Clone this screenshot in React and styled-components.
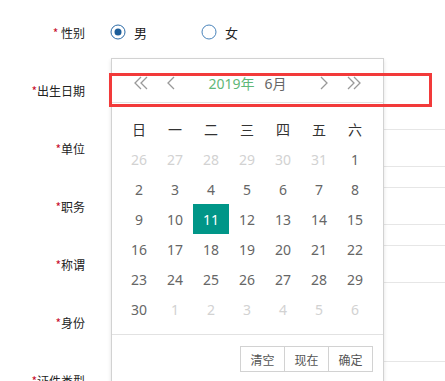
import React from "react";
import styled, { createGlobalStyle } from "styled-components";

const GlobalStyle = createGlobalStyle`
  html, body {
    margin: 0;
    padding: 0;
    background: #fff;
    overflow: hidden;
  }
  body {
    font-family: "Noto Sans", "Noto Sans CJK SC", sans-serif;
    color: #333;
  }
`;

const Pagina = styled.div`
  position: relative;
  width: 445px;
  height: 381px;
  overflow: hidden;
`;

const Formulario = styled.div`
  display: flex;
  flex-direction: column;
  gap: 20px;
  padding-top: 13px;
`;

const Linha = styled.div`
  display: flex;
  align-items: center;
  height: 38px;
`;

const Rotulo = styled.label`
  width: 85px;
  flex-shrink: 0;
  margin-right: 25px;
  text-align: right;
  font-size: 12px;
  color: #222;
  font-family: "Noto Sans CJK SC", sans-serif;
  white-space: nowrap;
`;

const Asterisco = styled.span`
  color: #c8102e;
`;

const GrupoRadio = styled.div`
  display: flex;
  align-items: center;
`;

const ItemRadio = styled.div`
  display: flex;
  align-items: center;
  gap: 8px;
  width: 91px;
  font-size: 13px;
  color: #222;
  font-family: "Noto Sans CJK SC", sans-serif;
`;

const Campo = styled.div`
  margin-left: 3px;
  height: 38px;
  box-sizing: border-box;
  width: ${(p) => p.largura}px;
  border: 1px solid #e6e6e6;
  flex-shrink: 0;
`;

const Calendario = styled.div`
  position: absolute;
  left: 111px;
  top: 58px;
  width: 273px;
  height: 340px;
  box-sizing: border-box;
  background: #fff;
  border: 1px solid #d2d2d2;
  box-shadow: 0 2px 4px rgba(0, 0, 0, 0.12);
`;

const Cabecalho = styled.div`
  display: flex;
  align-items: center;
  justify-content: space-between;
  height: 44px;
  box-sizing: border-box;
  padding: 4px 21px 0 21px;
  border-bottom: 1px solid #e2e2e2;
`;

const GrupoSeta = styled.div`
  display: flex;
  align-items: center;
  gap: ${(p) => p.espaco}px;
`;

const Titulo = styled.div`
  font-size: 14px;
  display: flex;
  gap: 10px;
`;

const Ano = styled.span`
  color: #5fb878;
`;

const Mes = styled.span`
  color: #666;
`;

const Grade = styled.div`
  display: grid;
  grid-template-columns: repeat(7, 36px);
  grid-auto-rows: 30px;
  padding: 11px 10px 10px 9px;
  border-bottom: 1px solid #e2e2e2;
`;

const DiaSemana = styled.div`
  display: flex;
  align-items: center;
  justify-content: center;
  font-size: 14px;
  color: #333;
  font-family: "Noto Sans CJK SC", sans-serif;
`;

const Dia = styled.div`
  display: flex;
  align-items: center;
  justify-content: center;
  font-size: 14px;
  color: ${(p) => (p.selecionado ? "#fff" : p.fora ? "#d2d2d2" : "#666")};
  background: ${(p) => (p.selecionado ? "#009688" : "transparent")};
`;

const Rodape = styled.div`
  display: flex;
  justify-content: flex-end;
  padding: 11px 10px 0 0;
`;

const Botao = styled.button`
  width: 45px;
  height: 26px;
  margin-left: -1px;
  padding: 0;
  background: #fff;
  border: 1px solid #d2d2d2;
  font-size: 12px;
  color: #555;
  font-family: "Noto Sans CJK SC", sans-serif;
`;

const Marcacao = styled.div`
  position: absolute;
  left: 109px;
  top: 73px;
  width: 323px;
  height: 34px;
  box-sizing: border-box;
  border: 3px solid #f23a3a;
  pointer-events: none;
`;

const Radio = ({ marcado }) => (
  <svg width="16" height="16" viewBox="0 0 16 16">
    <circle
      cx="8"
      cy="8"
      r="7"
      fill="#fff"
      stroke={marcado ? "#2b6aa6" : "#4a84bb"}
      strokeWidth="1"
    />
    {marcado && <circle cx="8" cy="8" r="3.5" fill="#1c5d99" />}
  </svg>
);

const SetaDupla = ({ direita }) => (
  <svg width="16" height="16" viewBox="0 0 16 16">
    <g
      fill="none"
      stroke="#999"
      strokeWidth="1.3"
      transform={direita ? "translate(16 0) scale(-1 1)" : undefined}
    >
      <path d="M8 2 L2 8 L8 14" />
      <path d="M14 2 L8 8 L14 14" />
    </g>
  </svg>
);

const SetaSimples = ({ direita }) => (
  <svg width="10" height="16" viewBox="0 0 10 16">
    <path
      d={direita ? "M1 2 L7 8 L1 14" : "M9 2 L3 8 L9 14"}
      fill="none"
      stroke="#999"
      strokeWidth="1.3"
    />
  </svg>
);

const semana = ["日", "一", "二", "三", "四", "五", "六"];

const montarDias = () => {
  const dias = [];
  [26, 27, 28, 29, 30, 31].forEach((d) => dias.push({ d, fora: true }));
  for (let d = 1; d <= 30; d++) dias.push({ d, fora: false });
  for (let d = 1; d <= 6; d++) dias.push({ d, fora: true });
  return dias;
};

const linhas = [
  { rotulo: "单位", largura: 400 },
  { rotulo: "职务", largura: 400 },
  { rotulo: "称谓", largura: 400 },
  { rotulo: "身份", largura: 200 },
  { rotulo: "证件类型", largura: 400 },
];

class App extends React.Component {
  render() {
    const dias = montarDias().map((item, i) => (
      <Dia key={i} fora={item.fora} selecionado={!item.fora && item.d === 11}>
        {item.d}
      </Dia>
    ));

    return (
      <Pagina>
        <GlobalStyle />
        <Formulario>
          <Linha>
            <Rotulo>
              <Asterisco>* </Asterisco>性别
            </Rotulo>
            <GrupoRadio>
              <ItemRadio>
                <Radio marcado />
                男
              </ItemRadio>
              <ItemRadio>
                <Radio />
                女
              </ItemRadio>
            </GrupoRadio>
          </Linha>
          <Linha>
            <Rotulo>
              <Asterisco>*</Asterisco>出生日期
            </Rotulo>
            <Campo largura={200} />
          </Linha>
          {linhas.map((linha) => (
            <Linha key={linha.rotulo}>
              <Rotulo>
                <Asterisco>*</Asterisco>
                {linha.rotulo}
              </Rotulo>
              <Campo largura={linha.largura} />
            </Linha>
          ))}
        </Formulario>

        <Calendario>
          <Cabecalho>
            <GrupoSeta espaco={16}>
              <SetaDupla />
              <SetaSimples />
            </GrupoSeta>
            <Titulo>
              <Ano>2019年</Ano>
              <Mes>6月</Mes>
            </Titulo>
            <GrupoSeta espaco={16}>
              <SetaSimples direita />
              <SetaDupla direita />
            </GrupoSeta>
          </Cabecalho>
          <Grade>
            {semana.map((s) => (
              <DiaSemana key={s}>{s}</DiaSemana>
            ))}
            {dias}
          </Grade>
          <Rodape>
            <Botao>清空</Botao>
            <Botao>现在</Botao>
            <Botao>确定</Botao>
          </Rodape>
        </Calendario>

        <Marcacao />
      </Pagina>
    );
  }
}

export default App;
